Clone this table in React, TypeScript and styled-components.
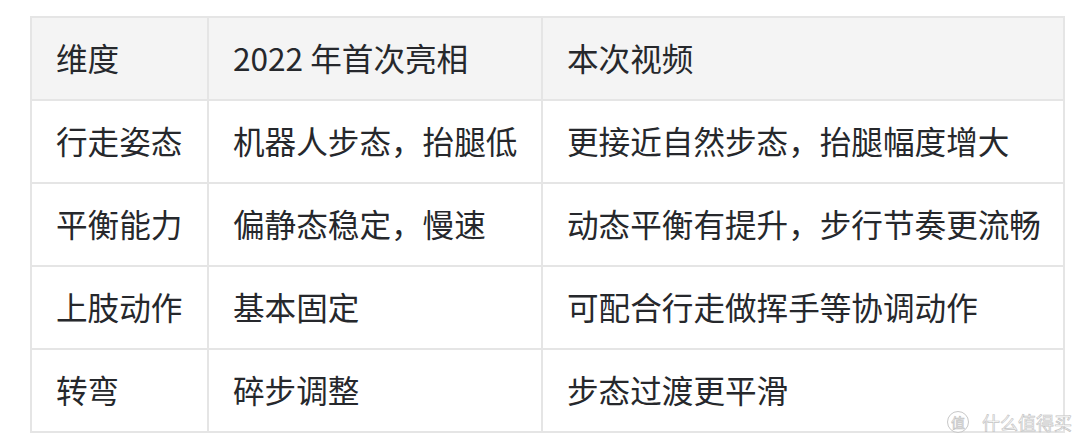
import { FC } from 'react';
import styled, { createGlobalStyle } from 'styled-components';

const GlobalStyle = createGlobalStyle`
	html, body {
		margin: 0;
		background: #fff;
	}
	body {
		font-family: "Noto Sans CJK SC", "Noto Sans", sans-serif;
		color: #26282c;
	}
`;

const rows = [
	['行走姿态', '机器人步态，抬腿低', '更接近自然步态，抬腿幅度增大'],
	['平衡能力', '偏静态稳定，慢速', '动态平衡有提升，步行节奏更流畅'],
	['上肢动作', '基本固定', '可配合行走做挥手等协调动作'],
	['转弯', '碎步调整', '步态过渡更平滑'],
];

const App: FC = () => {
	return (
		<Page>
			<GlobalStyle />
			<Table>
				<colgroup>
					<col style={{ width: 177 }} />
					<col style={{ width: 334 }} />
					<col />
				</colgroup>
				<thead>
					<tr>
						<HeadCell>维度</HeadCell>
						<HeadCell>2022 年首次亮相</HeadCell>
						<HeadCell>本次视频</HeadCell>
					</tr>
				</thead>
				<tbody>
					{rows.map((r) => (
						<tr key={r[0]}>
							{r.map((c) => (
								<Cell key={c}>{c}</Cell>
							))}
						</tr>
					))}
				</tbody>
			</Table>
			<Watermark>
				<Badge>值</Badge>
				<span>什么值得买</span>
			</Watermark>
		</Page>
	);
};

export default App;

const Page = styled.div`
	position: relative;
	width: 1080px;
	height: 445px;
	box-sizing: border-box;
	padding: 16px 0 0 30px;
	overflow: hidden;
`;

const Table = styled.table`
	width: 1035px;
	border-collapse: collapse;
	table-layout: fixed;
	font-size: 31.6px;
	line-height: 45px;
`;

const Cell = styled.td`
	border: 2px solid #e5e5e5;
	padding: 17px 24px 19px;
	text-align: left;
	white-space: nowrap;
`;

const HeadCell = styled(Cell).attrs({ as: 'th' })`
	background: #f4f4f4;
	font-weight: 400;
`;

const Watermark = styled.div`
	position: absolute;
	left: 947px;
	top: 410px;
	display: flex;
	align-items: center;
	gap: 13px;
	font-size: 18px;
	line-height: 24px;
	color: #fff;
	-webkit-text-stroke: 0.7px #c4c4c4;
`;

const Badge = styled.span`
	display: flex;
	align-items: center;
	justify-content: center;
	width: 20px;
	height: 20px;
	border: 1.5px solid #c8c8c8;
	border-radius: 50%;
	font-size: 14px;
	background: rgba(255, 255, 255, 0.6);
`;
